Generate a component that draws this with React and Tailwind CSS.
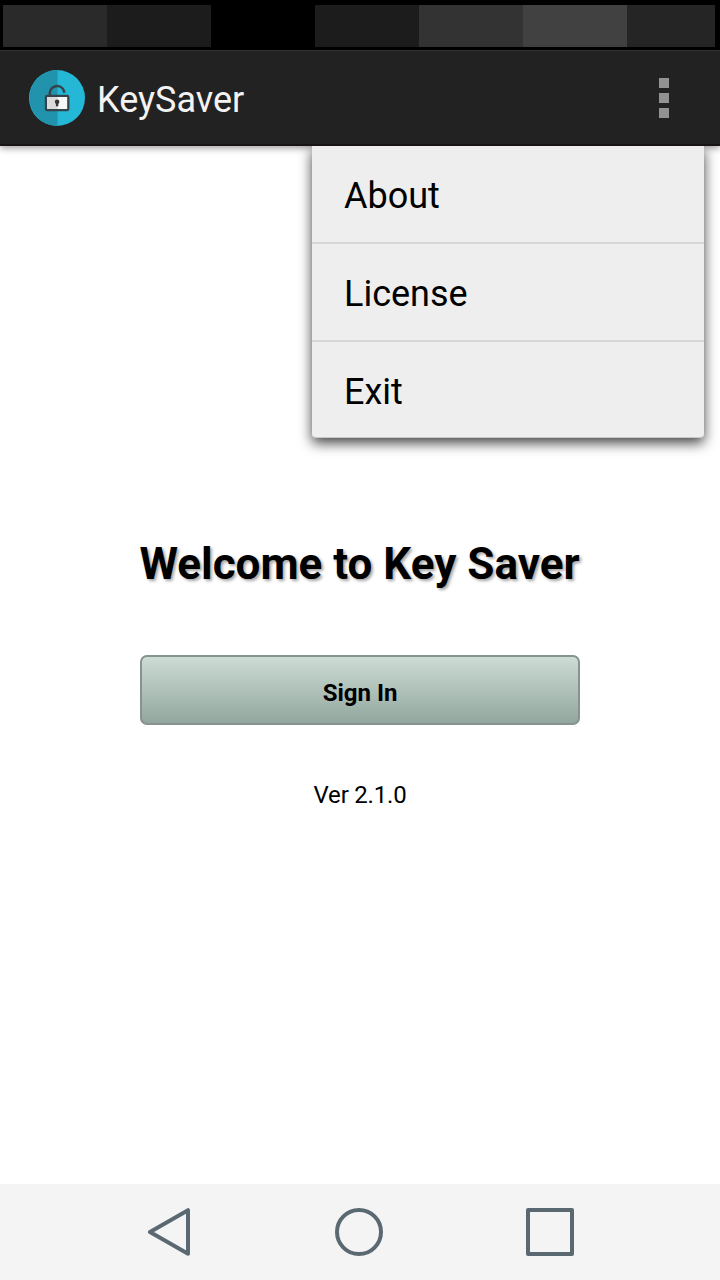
import React, { useState } from 'react';

const statusBlocks = [
  'w-[104px] bg-[#2a2a2a]',
  'w-[104px] bg-[#1c1c1c]',
  'w-[104px] bg-black',
  'w-[104px] bg-[#1c1c1c]',
  'w-[104px] bg-[#333333]',
  'w-[104px] bg-[#414141]',
  'w-[88px] bg-[#252525]',
];

const menuItems = ['About', 'License', 'Exit'];

function AppIcon() {
  return (
    <svg className="w-14 h-14" viewBox="0 0 56 56" fill="none">
      <circle cx="28" cy="28" r="28" fill="#25b7d6" />
      <path d="M28.5 0A28 28 0 0 0 28.5 56Z" fill="#2193ac" />
      <path
        d="M20.8 26V23.2a7.3 7.3 0 0 1 14.1-2.5L35.2 22.9"
        stroke="#35434a"
        strokeWidth="2.5"
      />
      <rect x="17" y="26" width="22" height="14" fill="#f8f8f8" />
      <rect x="17" y="26" width="11.5" height="14" fill="#dadada" />
      <rect x="16.9" y="25.9" width="22.4" height="14.2" rx="1" stroke="#35434a" strokeWidth="2.2" />
      <circle cx="28.1" cy="31.8" r="2.3" fill="#35383b" />
      <path d="M26.9 32H29.3V36.3H26.9Z" fill="#35383b" />
    </svg>
  );
}

function StatusBar() {
  return (
    <div className="flex h-[50px] bg-black pl-[3px] pt-[5px]">
      {statusBlocks.map((block, i) => (
        <div key={i} className={`h-[42px] ${block}`} />
      ))}
    </div>
  );
}

function Header({ onToggle }) {
  return (
    <header className="relative flex h-24 items-center border-t border-[#343434] border-b-2 border-b-[#191516] bg-[#222222] pl-[29px] pr-[51px] shadow-[0_2px_7px_rgba(0,0,0,0.4)]">
      <AppIcon />
      <h1 className="ml-3 flex-1 pt-1 text-[36px] leading-none text-[#f3f3f3]">KeySaver</h1>
      <button onClick={onToggle} aria-label="Menu" className="flex flex-col gap-[5px]">
        <span className="h-2.5 w-2.5 bg-[#929292]" />
        <span className="h-2.5 w-2.5 bg-[#929292]" />
        <span className="h-2.5 w-2.5 bg-[#929292]" />
      </button>
    </header>
  );
}

function Menu() {
  return (
    <ul className="absolute right-4 top-0 w-[392px] rounded-b-[4px] border-b border-[#c8c8c8] bg-[#eeeeee] text-[36px] leading-none text-black shadow-[0_5px_13px_rgba(0,0,0,0.75)]">
      {menuItems.map((item) => (
        <li
          key={item}
          className="flex h-[98px] items-center border-b-2 border-[#d6d6d6] pl-8 pt-1 last:h-[95px] last:border-b-0"
        >
          {item}
        </li>
      ))}
    </ul>
  );
}

function NavBar() {
  return (
    <nav className="flex h-24 items-center bg-[#f4f4f4] pl-[148px] text-[#5a6872]">
      <svg className="h-12 w-[42px]" viewBox="0 0 42 48" fill="none" stroke="currentColor">
        <path d="M40 2.2V45.8L2 24Z" strokeWidth="4" strokeLinejoin="round" />
      </svg>
      <svg className="ml-[145px] h-12 w-12" viewBox="0 0 48 48" fill="none" stroke="currentColor">
        <circle cx="24" cy="24" r="22" strokeWidth="4" />
      </svg>
      <svg className="ml-[143px] h-12 w-12" viewBox="0 0 48 48" fill="none" stroke="currentColor">
        <rect x="2" y="2" width="44" height="44" strokeWidth="4" strokeLinejoin="round" />
      </svg>
    </nav>
  );
}

export default function App() {
  const [open, setOpen] = useState(true);

  return (
    <div className="flex h-screen w-full flex-col overflow-hidden bg-white font-['Roboto',sans-serif]">
      <StatusBar />
      <Header onToggle={() => setOpen(!open)} />
      <main className="relative flex flex-1 flex-col items-center pt-[392px] text-black [clip-path:inset(0)]">
        {open && <Menu />}
        <h2 className="mr-px whitespace-nowrap text-[44px] font-bold leading-[52px] [text-shadow:2px_2px_3px_rgba(0,0,0,0.35)]">
          Welcome to Key Saver
        </h2>
        <button className="mt-[65px] h-[70px] w-[440px] rounded-[7px] border-2 border-[#879390] bg-linear-to-b from-[#cddcd5] to-[#93a79e] pt-1.5 text-[24px] font-bold">
          Sign In
        </button>
        <p className="mt-[56px] text-[24px] leading-7 tracking-[-0.2px]">Ver 2.1.0</p>
      </main>
      <NavBar />
    </div>
  );
}
